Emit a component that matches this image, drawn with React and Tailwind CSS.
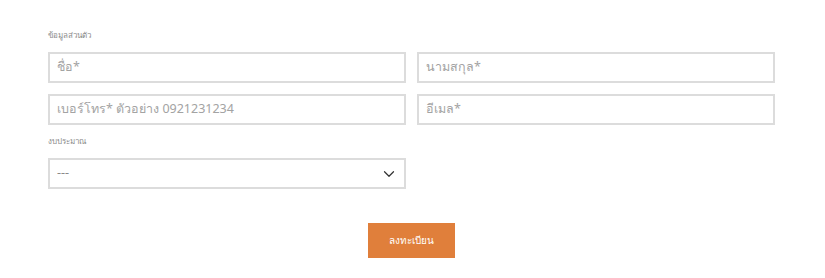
import { ChevronDown } from 'lucide-react';

const font = { fontFamily: '"Noto Sans", "Liberation Sans", sans-serif' };

function Field({ placeholder }) {
  return (
    <div className="h-[31px] border-2 border-[#dcdcdc] flex items-center px-[7px] text-[12.5px] text-[#a3a3a3] leading-none">
      {placeholder}
    </div>
  );
}

export default function App() {
  return (
    <div className="w-[825px] h-[278px] bg-white" style={font}>
      <div className="pl-[48px] pr-[50px] pt-[30px]">
        <div className="text-[8px] text-[#8a8a8a] h-[10px] leading-[10px]">ข้อมูลส่วนตัว</div>
        <div className="grid grid-cols-2 gap-x-[11px] gap-y-[11px] mt-[12px]">
          <Field placeholder="ชื่อ*" />
          <Field placeholder="นามสกุล*" />
          <Field placeholder="เบอร์โทร* ตัวอย่าง 0921231234" />
          <Field placeholder="อีเมล*" />
        </div>
        <div className="text-[8px] text-[#8a8a8a] h-[10px] leading-[10px] mt-[11px]">งบประมาณ</div>
        <div className="w-[358px] mt-[12px] h-[31px] border-2 border-[#dcdcdc] flex items-center justify-between pl-[7px] pr-[6px] text-[12.5px] text-[#8a8a8a]">
          <span>---</span>
          <ChevronDown size={18} strokeWidth={1.6} className="text-[#333]" />
        </div>
        <div className="flex justify-center mt-[34px] pr-[1px]">
          <div className="w-[87px] h-[35px] bg-[#e07f3b] flex items-center justify-center text-[10px] text-white">ลงทะเบียน</div>
        </div>
      </div>
    </div>
  );
}
